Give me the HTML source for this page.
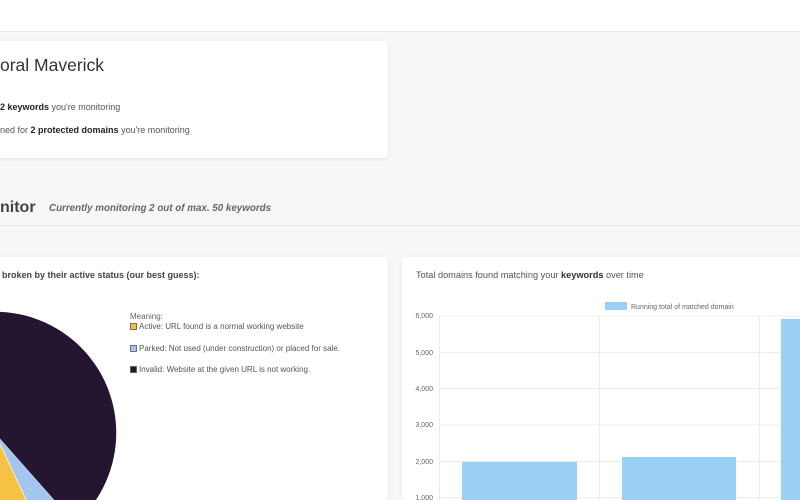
<!DOCTYPE html>
<html><head><style>
body{margin:0;width:800px;height:500px;overflow:hidden;background:#f6f7f9;font-family:"Liberation Sans",sans-serif;position:relative;color:#444}
.hdr{position:absolute;left:0;top:0;width:800px;height:31px;background:#fff;border-bottom:1px solid #e6e8ec}
.card{position:absolute;background:#fff;border-radius:4px;box-shadow:0 1px 4px rgba(0,0,0,.08)}
.t{position:absolute;white-space:nowrap}
</style></head><body>
<div class="hdr"></div>
<div class="card" style="left:-10px;top:41px;width:398px;height:117px"></div>
<div class="t" style="left:0;top:55px;font-size:17.5px;color:#333">oral Maverick</div>
<div class="t" style="left:0;top:102px;font-size:9px;color:#555"><b style="color:#222">2 keywords</b> you're monitoring</div>
<div class="t" style="left:0;top:125px;font-size:9px;color:#555">ned for <b style="color:#222">2 protected domains</b> you're monitoring</div>
<div class="t" style="left:0;top:199px;font-size:16px;font-weight:bold;color:#444">nitor</div>
<div class="t" style="left:49px;top:203px;font-size:9.8px;font-style:italic;font-weight:bold;color:#666">Currently monitoring 2 out of max. 50 keywords</div>
<div style="position:absolute;left:0;top:225px;width:800px;height:1px;background:#e6e8ec"></div>
<div class="card" style="left:-10px;top:257px;width:398px;height:243px"></div>
<div class="card" style="left:402px;top:257px;width:410px;height:243px"></div>
<div class="t" style="left:2px;top:270px;font-size:9px;font-weight:bold;color:#444">broken by their active status (our best guess):</div>
<svg style="position:absolute;left:0;top:0" width="800" height="500">
<path d="M-5,433 L46.1,542.7 A121,121 0 0 1 -50,545 Z" fill="#f6c244"/>
<path d="M-5,433 L75.2,523.6 A121,121 0 0 1 46.1,542.7 Z" fill="#a4c6ee" stroke="#fff" stroke-width="0.7"/>
<path d="M-5,433 L75.2,523.6 A121,121 0 1 0 -50,545 Z" fill="#241530"/>
<rect x="130.5" y="323.5" width="6" height="6" fill="#f6c244" stroke="#555" stroke-width="0.8"/>
<rect x="130.5" y="345.5" width="6" height="6" fill="#a4c6ee" stroke="#555" stroke-width="0.8"/>
<rect x="130.5" y="366.5" width="6" height="6" fill="#241530" stroke="#555" stroke-width="0.8"/>
<g stroke="#ececec" stroke-width="1">
<line x1="439" y1="316" x2="800" y2="316"/><line x1="439" y1="352.5" x2="800" y2="352.5"/><line x1="439" y1="388.5" x2="800" y2="388.5"/><line x1="439" y1="425" x2="800" y2="425"/><line x1="439" y1="461.5" x2="800" y2="461.5"/><line x1="439" y1="497.5" x2="800" y2="497.5"/>
<line x1="439.5" y1="316" x2="439.5" y2="500"/><line x1="599.5" y1="316" x2="599.5" y2="500"/><line x1="759.5" y1="316" x2="759.5" y2="500"/>
</g>
<g fill="#9ad0f5"><rect x="462" y="462" width="115" height="40"/><rect x="622" y="457" width="114" height="45"/><rect x="781" y="319" width="25" height="185"/><rect x="605" y="302" width="22" height="8"/></g>
<g font-size="7" fill="#666" text-anchor="end" font-family="Liberation Sans">
<text x="433" y="318">6,000</text><text x="433" y="355">5,000</text><text x="433" y="391">4,000</text><text x="433" y="427">3,000</text><text x="433" y="464">2,000</text><text x="433" y="500">1,000</text></g>
<text x="631" y="309" font-size="7" fill="#666" font-family="Liberation Sans">Running total of matched domain</text>
</svg>
<div class="t" style="left:130px;top:312px;font-size:8px;color:#666">Meaning:</div>
<div class="t" style="left:139px;top:322px;font-size:8px;color:#555">Active: URL found is a normal working website</div>
<div class="t" style="left:139px;top:344px;font-size:8px;color:#555">Parked: Not used (under construction) or placed for sale.</div>
<div class="t" style="left:139px;top:365px;font-size:8px;color:#555">Invalid: Website at the given URL is not working.</div>
<div class="t" style="left:416px;top:270px;font-size:9.2px;color:#555">Total domains found matching your <b style="color:#333">keywords</b> over time</div>
</body></html>
